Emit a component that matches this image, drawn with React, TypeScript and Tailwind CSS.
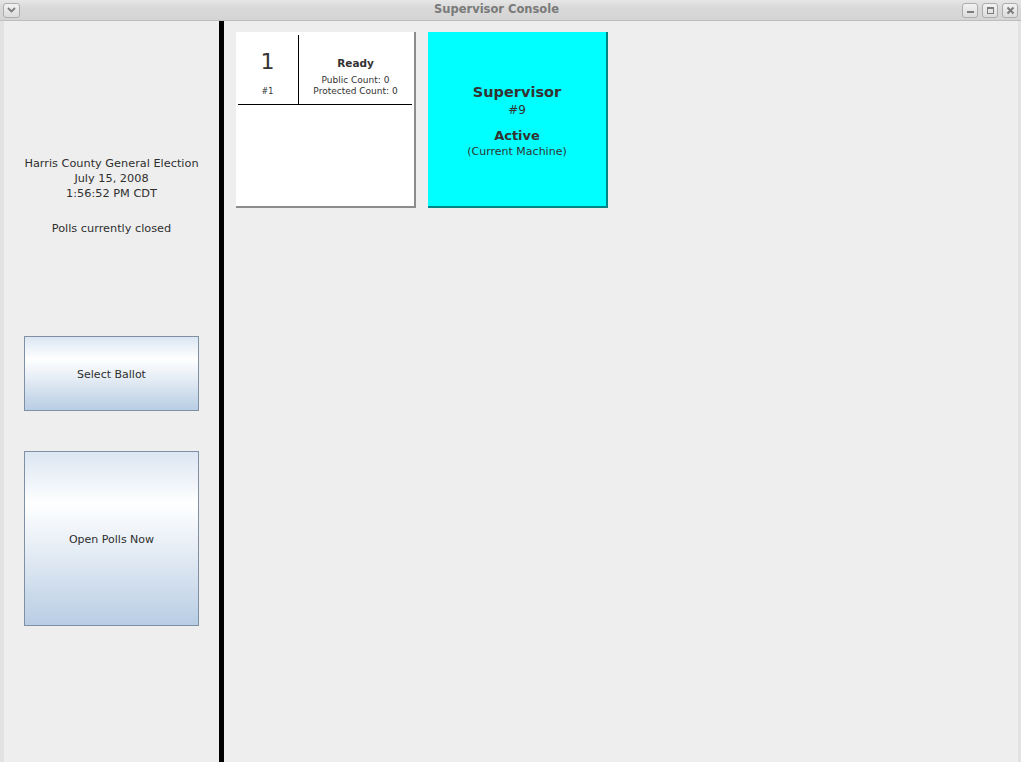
import React from 'react';

const FONT = { fontFamily: '"DejaVu Sans", Verdana, sans-serif' };

function WinButton({ children, wide }: { children: React.ReactNode; wide?: boolean }) {
  return (
    <div
      className={`flex h-[15px] items-center justify-center rounded-[3px] border border-[#adadad] bg-[linear-gradient(180deg,#f2f2f2_0%,#dcdcdc_100%)] ${
        wide ? 'w-[17px]' : 'w-[16px]'
      }`}
    >
      {children}
    </div>
  );
}

function TitleBar() {
  return (
    <div className="flex h-[21px] shrink-0 items-center border-b border-[#bdbdbd] bg-[linear-gradient(180deg,#e6e6e6_0%,#d9d9d9_40%,#d4d4d4_100%)]">
      <div className="pl-[3px]">
        <WinButton wide>
          <svg width="9" height="6" viewBox="0 0 9 6">
            <path d="M1 1 L4.5 4.5 L8 1" fill="none" stroke="#7c7c7c" strokeWidth="1.8" />
          </svg>
        </WinButton>
      </div>
      <div className="flex-1 pl-[11px] text-center text-[11.5px] font-bold text-[#7a7a7a]">
        Supervisor Console
      </div>
      <div className="flex gap-[4px] pr-[3px]">
        <WinButton>
          <svg width="9" height="9" viewBox="0 0 9 9">
            <rect x="1" y="5" width="7" height="2" fill="#7c7c7c" />
          </svg>
        </WinButton>
        <WinButton>
          <svg width="9" height="9" viewBox="0 0 9 9">
            <rect x="1.5" y="1.5" width="6" height="6" fill="none" stroke="#7c7c7c" strokeWidth="1" />
            <rect x="1" y="1" width="7" height="2" fill="#7c7c7c" />
          </svg>
        </WinButton>
        <WinButton>
          <svg width="9" height="9" viewBox="0 0 9 9">
            <path d="M1.5 1.5 L7.5 7.5 M7.5 1.5 L1.5 7.5" stroke="#7c7c7c" strokeWidth="2" />
          </svg>
        </WinButton>
      </div>
    </div>
  );
}

function PanelButton({ label, height }: { label: string; height: string }) {
  return (
    <button
      type="button"
      className={`flex w-[175px] items-center justify-center border border-[#7f90a5] bg-[linear-gradient(180deg,#dbe6f2_0%,#ffffff_30%,#e0e9f3_62%,#b8cde4_100%)] pt-[3px] text-[11px] text-[#2e2e2e] ${height}`}
    >
      {label}
    </button>
  );
}

function MachineCard() {
  return (
    <div className="h-[176px] w-[180px] shrink-0 border-b-2 border-r-2 border-[#8c8c8c] bg-white px-[2px] pt-[3px]">
      <div className="flex h-[70px] border-b border-black">
        <div className="flex w-[61px] flex-col items-center border-r border-black pr-[1px] pt-[14px] text-[#333]">
          <div className="text-[22px] leading-[26px]">1</div>
          <div className="mt-[12px] text-[8px] leading-[10px]">#1</div>
        </div>
        <div className="flex flex-1 flex-col items-center pt-[21px] text-[#333]">
          <div className="text-[10.5px] font-bold leading-[14px]">Ready</div>
          <div className="mt-[5px] text-[9px] leading-[11px]">Public Count: 0</div>
          <div className="text-[9px] leading-[11px]">Protected Count: 0</div>
        </div>
      </div>
    </div>
  );
}

function SupervisorCard() {
  return (
    <div className="flex h-[176px] w-[180px] shrink-0 flex-col items-center border-b-2 border-r-2 border-[#008484] bg-[#00ffff] pt-[51px] text-[#333]">
      <div className="text-[14.5px] font-bold leading-[18px]">Supervisor</div>
      <div className="mt-[2px] text-[12px] leading-[14px]">#9</div>
      <div className="mt-[11px] text-[13px] font-bold leading-[16px]">Active</div>
      <div className="mt-[1px] text-[11px] leading-[13px]">(Current Machine)</div>
    </div>
  );
}

export default function App() {
  return (
    <div className="flex h-[762px] w-[1021px] flex-col bg-[#eeeeee]" style={FONT}>
      <TitleBar />
      <div className="flex min-h-0 flex-1">
        <div className="w-[4px] shrink-0 bg-[#e2e2e2]" />
        <aside className="flex w-[215px] shrink-0 flex-col items-center pt-[135px] text-[#2f2f2f]">
          <div className="text-center text-[11.3px] leading-[15px]">
            <div>Harris County General Election</div>
            <div>July 15, 2008</div>
            <div>1:56:52 PM CDT</div>
            <div className="mt-[20px]">Polls currently closed</div>
          </div>
          <div className="mt-[100px]">
            <PanelButton label="Select Ballot" height="h-[75px]" />
          </div>
          <div className="mt-[40px]">
            <PanelButton label="Open Polls Now" height="h-[175px]" />
          </div>
        </aside>
        <div className="w-[5px] shrink-0 bg-black" />
        <main className="flex flex-1 items-start gap-[12px] pl-[12px] pt-[11px]">
          <MachineCard />
          <SupervisorCard />
        </main>
        <div className="w-[3px] shrink-0 bg-[#e2e2e2]" />
      </div>
    </div>
  );
}
